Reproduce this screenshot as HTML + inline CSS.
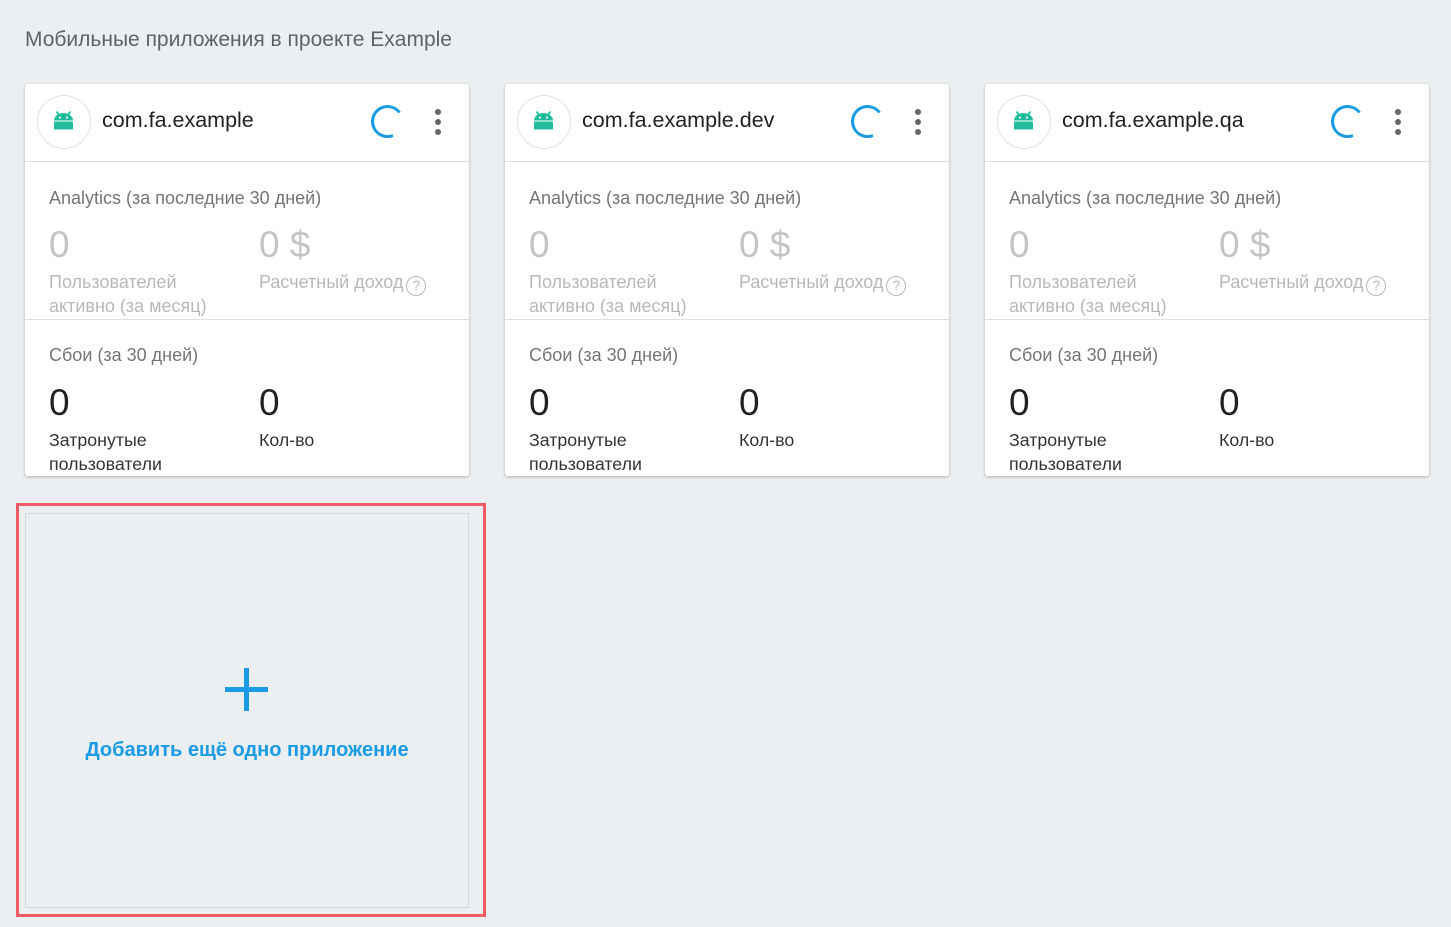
<!DOCTYPE html>
<html><head><meta charset="utf-8"><style>
*{box-sizing:border-box;margin:0;padding:0}
body{width:1451px;height:927px;background:#eceff1;font-family:"Liberation Sans",sans-serif;position:relative;overflow:hidden}
.abs{position:absolute}
.title{left:25px;top:28px;font-size:21px;color:#5f6368}
.card{position:absolute;top:84px;width:444px;height:392px;background:#fff;border-radius:3px;box-shadow:0 1px 3px rgba(0,0,0,.25)}
.av{left:12px;top:11px;width:54px;height:54px;border-radius:50%;border:1.5px solid #e2e2e2}
.name{left:77px;top:24px;font-size:21.5px;color:#212121}
.hl{left:0;right:0;height:1px;background:#dedede}
.lbl{font-size:18px;color:#757575}
.gz{font-size:37px;color:#c4c4c4;font-weight:300}
.gl{font-size:18px;color:#b8b8b8;line-height:24px}
.bz{font-size:37px;color:#212121}
.bl{font-size:17.8px;color:#333;line-height:24px}
.q{display:inline-block;width:20px;height:20px;border:1.5px solid #b8b8b8;border-radius:50%;font-size:14px;text-align:center;line-height:17px;vertical-align:-2px;margin-left:3px}
</style></head><body>
<div class="abs title">Мобильные приложения в проекте Example</div>

<div class="card" style="left:25px">
 <div class="abs av"><svg width="51" height="51" viewBox="0 0 51 51"><g fill="#1fbc9c"><path d="M16 24.5a9.5 7.5 0 0 1 19 0z"/><rect x="16" y="25.5" width="19" height="8" rx="1"/><path d="M18.5 15.5l2.5 3.5M32.5 15.5l-2.5 3.5" stroke="#1fbc9c" stroke-width="1.8"/></g><circle cx="22" cy="21.5" r="1.1" fill="#fff"/><circle cx="29" cy="21.5" r="1.1" fill="#fff"/></svg></div>
 <div class="abs name">com.fa.example</div>
 <svg class="abs" style="left:346px;top:20px" width="36" height="36"><path d="M28.5 8.5A15 15 0 1 0 22 31.5" fill="none" stroke="#1a9be6" stroke-width="3"/></svg>
 <svg class="abs" style="left:406px;top:23px" width="14" height="32"><circle cx="7" cy="5" r="3" fill="#666"/><circle cx="7" cy="15" r="3" fill="#666"/><circle cx="7" cy="25" r="3" fill="#666"/></svg>
 <div class="abs hl" style="top:77px"></div>
 <div class="abs lbl" style="left:24px;top:104px">Analytics (за последние 30 дней)</div>
 <div class="abs gz" style="left:24px;top:140px">0</div>
 <div class="abs gz" style="left:234px;top:140px">0 $</div>
 <div class="abs gl" style="left:24px;top:186px">Пользователей<br>активно (за месяц)</div>
 <div class="abs gl" style="left:234px;top:186px">Расчетный доход<span class="q">?</span></div>
 <div class="abs hl" style="top:235px"></div>
 <div class="abs lbl" style="left:24px;top:261px">Сбои (за 30 дней)</div>
 <div class="abs bz" style="left:24px;top:298px">0</div>
 <div class="abs bz" style="left:234px;top:298px">0</div>
 <div class="abs bl" style="left:24px;top:344px">Затронутые<br>пользователи</div>
 <div class="abs bl" style="left:234px;top:344px">Кол-во</div>
</div>

<div class="card" style="left:505px">
 <div class="abs av"><svg width="51" height="51" viewBox="0 0 51 51"><g fill="#1fbc9c"><path d="M16 24.5a9.5 7.5 0 0 1 19 0z"/><rect x="16" y="25.5" width="19" height="8" rx="1"/><path d="M18.5 15.5l2.5 3.5M32.5 15.5l-2.5 3.5" stroke="#1fbc9c" stroke-width="1.8"/></g><circle cx="22" cy="21.5" r="1.1" fill="#fff"/><circle cx="29" cy="21.5" r="1.1" fill="#fff"/></svg></div>
 <div class="abs name">com.fa.example.dev</div>
 <svg class="abs" style="left:346px;top:20px" width="36" height="36"><path d="M28.5 8.5A15 15 0 1 0 22 31.5" fill="none" stroke="#1a9be6" stroke-width="3"/></svg>
 <svg class="abs" style="left:406px;top:23px" width="14" height="32"><circle cx="7" cy="5" r="3" fill="#666"/><circle cx="7" cy="15" r="3" fill="#666"/><circle cx="7" cy="25" r="3" fill="#666"/></svg>
 <div class="abs hl" style="top:77px"></div>
 <div class="abs lbl" style="left:24px;top:104px">Analytics (за последние 30 дней)</div>
 <div class="abs gz" style="left:24px;top:140px">0</div>
 <div class="abs gz" style="left:234px;top:140px">0 $</div>
 <div class="abs gl" style="left:24px;top:186px">Пользователей<br>активно (за месяц)</div>
 <div class="abs gl" style="left:234px;top:186px">Расчетный доход<span class="q">?</span></div>
 <div class="abs hl" style="top:235px"></div>
 <div class="abs lbl" style="left:24px;top:261px">Сбои (за 30 дней)</div>
 <div class="abs bz" style="left:24px;top:298px">0</div>
 <div class="abs bz" style="left:234px;top:298px">0</div>
 <div class="abs bl" style="left:24px;top:344px">Затронутые<br>пользователи</div>
 <div class="abs bl" style="left:234px;top:344px">Кол-во</div>
</div>

<div class="card" style="left:985px">
 <div class="abs av"><svg width="51" height="51" viewBox="0 0 51 51"><g fill="#1fbc9c"><path d="M16 24.5a9.5 7.5 0 0 1 19 0z"/><rect x="16" y="25.5" width="19" height="8" rx="1"/><path d="M18.5 15.5l2.5 3.5M32.5 15.5l-2.5 3.5" stroke="#1fbc9c" stroke-width="1.8"/></g><circle cx="22" cy="21.5" r="1.1" fill="#fff"/><circle cx="29" cy="21.5" r="1.1" fill="#fff"/></svg></div>
 <div class="abs name">com.fa.example.qa</div>
 <svg class="abs" style="left:346px;top:20px" width="36" height="36"><path d="M28.5 8.5A15 15 0 1 0 22 31.5" fill="none" stroke="#1a9be6" stroke-width="3"/></svg>
 <svg class="abs" style="left:406px;top:23px" width="14" height="32"><circle cx="7" cy="5" r="3" fill="#666"/><circle cx="7" cy="15" r="3" fill="#666"/><circle cx="7" cy="25" r="3" fill="#666"/></svg>
 <div class="abs hl" style="top:77px"></div>
 <div class="abs lbl" style="left:24px;top:104px">Analytics (за последние 30 дней)</div>
 <div class="abs gz" style="left:24px;top:140px">0</div>
 <div class="abs gz" style="left:234px;top:140px">0 $</div>
 <div class="abs gl" style="left:24px;top:186px">Пользователей<br>активно (за месяц)</div>
 <div class="abs gl" style="left:234px;top:186px">Расчетный доход<span class="q">?</span></div>
 <div class="abs hl" style="top:235px"></div>
 <div class="abs lbl" style="left:24px;top:261px">Сбои (за 30 дней)</div>
 <div class="abs bz" style="left:24px;top:298px">0</div>
 <div class="abs bz" style="left:234px;top:298px">0</div>
 <div class="abs bl" style="left:24px;top:344px">Затронутые<br>пользователи</div>
 <div class="abs bl" style="left:234px;top:344px">Кол-во</div>
</div>

<div class="abs" style="left:16px;top:503px;width:470px;height:414px;border:3px solid #f25a64"></div>
<div class="abs" style="left:25px;top:513px;width:444px;height:395px;border:1px solid #d6d9dc;background:#eceff1"></div>
<div class="abs" style="left:225px;top:687px;width:43px;height:5px;background:#1a9be6"></div>
<div class="abs" style="left:244px;top:668px;width:5px;height:43px;background:#1a9be6"></div>
<div class="abs" style="left:25px;top:739px;width:444px;text-align:center;font-size:20px;font-weight:bold;color:#1a9be6">Добавить ещё одно приложение</div>
</body></html>
